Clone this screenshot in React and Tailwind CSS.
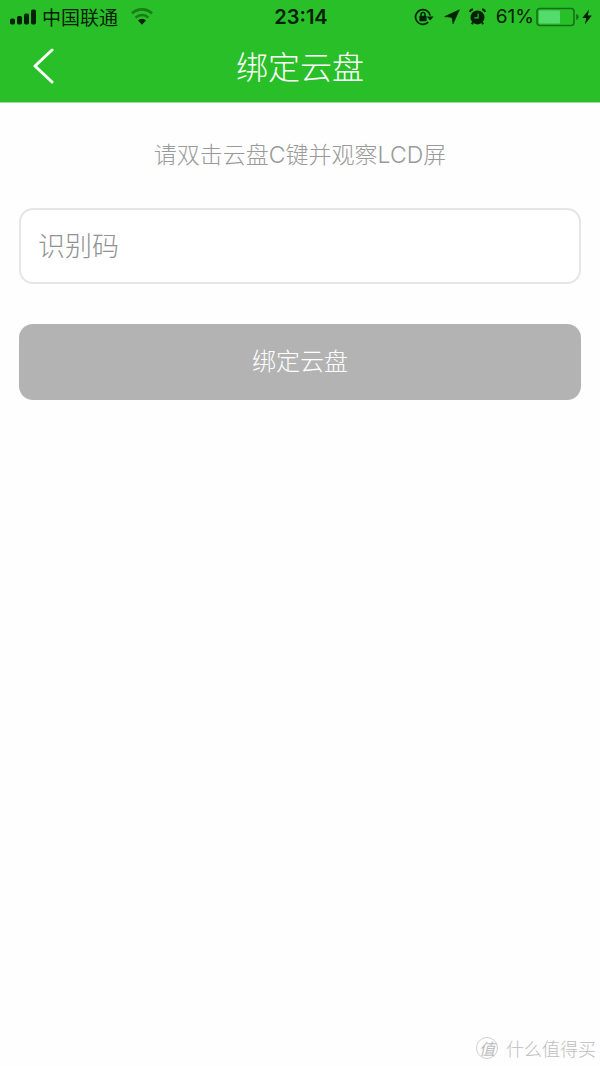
import React, { useState } from "react";

const StatusBar = () => (
    <div className="grid grid-cols-[1fr_auto_1fr] items-center h-[34px] pl-2.5 pr-2 text-[#052005]">
        <div className="flex items-center">
            <svg className="w-[26px] h-5" viewBox="0 0 26 20" fill="currentColor" aria-hidden="true">
                <rect x="0" y="11.5" width="5" height="6" rx="1.8" />
                <rect x="7" y="9" width="5" height="8.5" rx="1.8" />
                <rect x="14" y="6.5" width="5" height="11" rx="1.8" />
                <rect x="21" y="2.5" width="5" height="15" rx="1.8" />
            </svg>
            <span className="ml-1.5 text-[19px] leading-7 font-['Noto_Sans_CJK_SC',sans-serif]">中国联通</span>
            <svg className="ml-3 w-6 h-5" viewBox="0 0 24 20" fill="none" stroke="currentColor" aria-hidden="true">
                <path d="M2 6.4 A14.5 14.5 0 0 1 22 6.4" strokeWidth="2.6" opacity=".42" />
                <path d="M5.6 10.6 A9 9 0 0 1 18.4 10.6" strokeWidth="2.6" opacity=".42" />
                <path d="M8 13.6 A5.4 5.4 0 0 1 16 13.6 L12 17.7 Z" fill="currentColor" stroke="none" />
            </svg>
        </div>

        <time className="text-xl leading-8 font-semibold">23:14</time>

        <div className="flex items-center justify-end">
            {/* Rotation lock */}
            <svg className="w-5 h-5" viewBox="0 0 20 20" fill="none" stroke="currentColor" aria-hidden="true">
                <path d="M14.2 15.2 A7.4 7.4 0 1 1 16.2 8.6" strokeWidth="1.7" />
                <path d="M12.6 9.4 H19.6 L16.2 13.4 Z" fill="currentColor" stroke="none" />
                <rect x="5.4" y="8.8" width="7.2" height="5.4" rx=".8" fill="currentColor" stroke="none" />
                <path d="M7 9.5 V7.6 A2 2 0 0 1 11 7.6 V9.5" strokeWidth="1.5" />
            </svg>
            {/* Location */}
            <svg className="ml-2.5 w-4 h-5" viewBox="0 0 16 20" fill="currentColor" stroke="currentColor" strokeWidth=".6" strokeLinejoin="round" aria-hidden="true">
                <path d="M15.4 2.8 L9 16.8 L8 10.4 L.7 9.6 Z" />
            </svg>
            {/* Alarm */}
            <svg className="ml-2 w-5 h-5" viewBox="0 0 20 20" fill="none" stroke="currentColor" aria-hidden="true">
                <circle cx="9.5" cy="10.4" r="7" fill="currentColor" stroke="none" />
                <path d="M1.9 5 Q2.3 2.7 4.9 2.3 M17.1 5 Q16.7 2.7 14.1 2.3" strokeWidth="1.9" />
                <path d="M5.3 15 L3.7 17.2 M13.7 15 L15.3 17.2" strokeWidth="2" />
                <path d="M10.1 6.4 V10.8 H6.3" stroke="#29bf28" strokeWidth="1.2" />
            </svg>
            <span className="ml-2 text-[19px] leading-8">61%</span>
            {/* Battery */}
            <svg className="ml-0.5 w-11 h-5" viewBox="0 0 44 20" fill="none" aria-hidden="true">
                <rect x="1" y="1.5" width="37" height="17" rx="3" stroke="#16701a" strokeWidth="1.6" />
                <rect x="3" y="3.5" width="21" height="13" rx="1.2" fill="#53dc6c" />
                <path d="M40.2 7 Q42.8 7.5 42.8 10 Q42.8 12.5 40.2 13 Z" fill="#16701a" />
            </svg>
            <svg className="ml-0.5 w-2.5 h-5" viewBox="0 0 10 20" fill="currentColor" aria-hidden="true">
                <path d="M7 2.6 L.3 11 H4.3 L2.8 17.4 L9.8 8.6 H5.8 Z" />
            </svg>
        </div>
    </div>
);

const Watermark = () => (
    <div className="flex items-center gap-2 text-[#bdbdbd] font-['Noto_Sans_CJK_SC',sans-serif]">
        <span className="flex items-center justify-center w-[22px] h-[22px] rounded-full border border-[#d0d0d0] text-base leading-none italic">
            值
        </span>
        <span className="text-lg leading-6 font-light">什么值得买</span>
    </div>
);

const App = () => {
    const [code, setCode] = useState("");

    return (
        <div className="min-h-screen flex flex-col bg-[#fefefe] font-['Inter','Noto_Sans_CJK_SC',sans-serif]">
            <header className="bg-[#29bf28] border-b border-[#a8d8a6]">
                <StatusBar />
                <div className="grid grid-cols-[80px_1fr_80px] items-center h-[68px]">
                    <button type="button" aria-label="返回" className="pl-8 h-full">
                        <svg className="w-6 h-10" viewBox="0 0 24 40" fill="none" stroke="#fff" strokeWidth="3" strokeLinecap="round" strokeLinejoin="round" aria-hidden="true">
                            <path d="M20 2 L3 18 L20 34" />
                        </svg>
                    </button>
                    <h1 className="text-center text-[32px] leading-10 font-light text-white">绑定云盘</h1>
                </div>
            </header>

            <main className="flex-grow px-[19px] pt-9">
                <form onSubmit={(e) => e.preventDefault()}>
                    <label htmlFor="code" className="block text-center text-[23px] leading-8 font-light text-[#9a9a9a]">
                        请双击云盘C键并观察LCD屏
                    </label>
                    <input
                        id="code"
                        type="text"
                        value={code}
                        onChange={(e) => setCode(e.target.value)}
                        placeholder="识别码"
                        className="block w-full h-[76px] mt-[37px] px-[17px] rounded-[14px] border-2 border-[#e6e6e6] bg-white text-[27px] font-light text-gray-700 placeholder:text-[#929292] outline-none"
                    />
                    <button
                        type="submit"
                        className="block w-full h-[76px] mt-10 rounded-[14px] bg-[#b3b3b3] text-2xl font-light text-white"
                    >
                        绑定云盘
                    </button>
                </form>
            </main>

            <footer className="flex justify-end pr-1 pb-1.5">
                <Watermark />
            </footer>
        </div>
    );
};

export default App;
